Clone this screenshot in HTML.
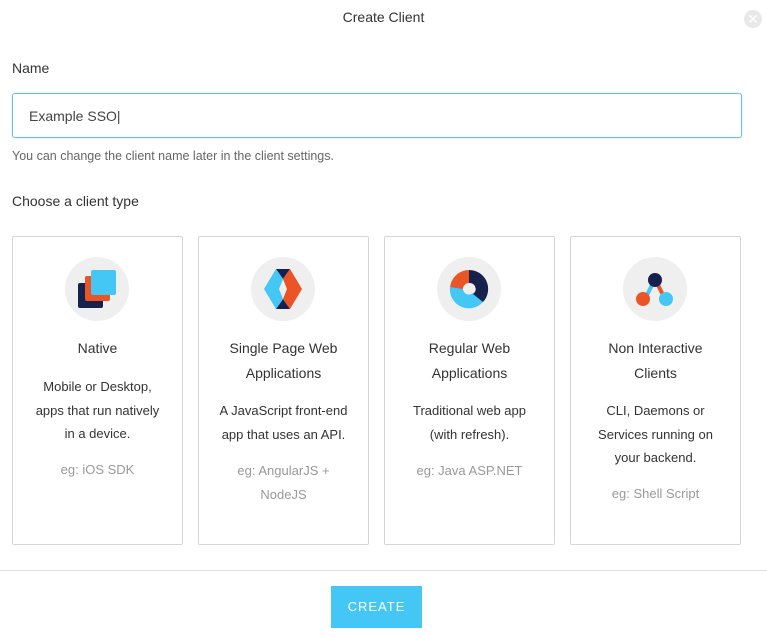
<!DOCTYPE html>
<html><head><style>
body{margin:0;width:767px;height:636px;background:#fff;font-family:"Liberation Sans",sans-serif;color:#333;position:relative;overflow:hidden}
.t{position:absolute;top:9px;left:0;width:767px;text-align:center;font-size:14px;color:#333}
.x{position:absolute;left:744px;top:10px;width:18px;height:18px;border-radius:50%;background:#e8e8e8;color:#fff;font-size:14px;line-height:18px;text-align:center}
.lbl{position:absolute;left:12px;font-size:14px;color:#333}
.inp{position:absolute;left:12px;top:93px;width:730px;height:45px;border:1px solid #6cbef0;border-radius:3px;box-sizing:border-box;box-shadow:0 0 2px #bfe2f8}
.inp span{position:absolute;left:16px;top:14px;font-size:14px;color:#444}
.help{position:absolute;left:12px;top:149px;font-size:12.5px;color:#666}
.card{position:absolute;top:236px;width:171px;height:309px;border:1px solid #d6d6d6;border-radius:2px;box-sizing:border-box;text-align:center}
.card svg{position:absolute;left:52px;top:20px}
.card h3{position:absolute;top:99px;left:0;width:100%;margin:0;font-weight:normal;font-size:14px;line-height:25px;color:#333}
.card p{position:absolute;left:17px;width:135px;margin:0;font-size:13px;line-height:23.5px;color:#333}
.card .eg{color:#999}
.hr{position:absolute;left:0;top:570px;width:767px;border-top:1px solid #e2e2e2}
.btn{position:absolute;left:331px;top:586px;width:91px;height:42px;background:#44c7f4;color:#fff;font-size:13px;letter-spacing:1px;text-align:center;line-height:42px}
</style></head><body>
<div class="t">Create Client</div>
<div class="x">✕</div>
<div class="lbl" style="top:60px">Name</div>
<div class="inp"><span>Example SSO|</span></div>
<div class="help">You can change the client name later in the client settings.</div>
<div class="lbl" style="top:193px">Choose a client type</div>

<div class="card" style="left:12px">
<svg width="64" height="64" viewBox="0 0 64 64"><circle cx="32" cy="32" r="32" fill="#efefef"/>
<rect x="13" y="26" width="25" height="25" rx="2" fill="#16214d"/>
<rect x="20" y="19" width="25" height="25" rx="2" fill="#eb5424"/>
<rect x="26" y="13" width="25" height="25" rx="2" fill="#44c7f4"/></svg>
<h3>Native</h3>
<p style="top:138px">Mobile or Desktop, apps that run natively in a device.</p>
<p class="eg" style="top:221px">eg: iOS SDK</p></div>

<div class="card" style="left:198px">
<svg width="64" height="64" viewBox="0 0 64 64"><circle cx="32" cy="32" r="32" fill="#efefef"/>
<polygon points="25,12 39,12 32,22" fill="#16214d"/>
<polygon points="25,52 39,52 32,42" fill="#16214d"/>
<polygon points="25,12 32,22 28,32 32,42 25,52 13,32" fill="#44c7f4"/>
<polygon points="39,12 51,32 39,52 32,42 36,32 32,22" fill="#eb5424"/></svg>
<h3>Single Page Web<br>Applications</h3>
<p style="top:162px">A JavaScript front-end app that uses an API.</p>
<p class="eg" style="top:222px">eg: AngularJS + NodeJS</p></div>

<div class="card" style="left:384px">
<svg width="64" height="64" viewBox="0 0 64 64"><circle cx="32" cy="32" r="32" fill="#efefef"/>
<path d="M32 13A19 19 0 0 0 13 32L26 32A6 6 0 0 1 32 26Z" fill="#eb5424"/>
<path d="M13 30A19 19 0 0 0 46 45L36 36A6 6 0 0 1 26 32Z" fill="#44c7f4"/>
<path d="M32 13A19 19 0 0 1 46 45L36 37A6 6 0 0 0 32 26Z" fill="#16214d"/>
<path d="M32 13Q40 20 38 32L38 28Q36 20 32 13" fill="#16214d"/></svg>
<h3>Regular Web<br>Applications</h3>
<p style="top:162px">Traditional web app (with refresh).</p>
<p class="eg" style="top:222px">eg: Java ASP.NET</p></div>

<div class="card" style="left:570px">
<svg width="64" height="64" viewBox="0 0 64 64"><circle cx="32" cy="32" r="32" fill="#efefef"/>
<line x1="31" y1="24" x2="24" y2="38" stroke="#44c7f4" stroke-width="4"/>
<line x1="33" y1="24" x2="40" y2="38" stroke="#eb5424" stroke-width="4"/>
<circle cx="32" cy="23" r="7" fill="#16214d"/>
<circle cx="20" cy="42" r="7" fill="#eb5424"/>
<circle cx="43" cy="42" r="7" fill="#44c7f4"/></svg>
<h3>Non Interactive<br>Clients</h3>
<p style="top:162px">CLI, Daemons or Services running on your backend.</p>
<p class="eg" style="top:245px">eg: Shell Script</p></div>

<div class="hr"></div>
<div class="btn">CREATE</div>
</body></html>
